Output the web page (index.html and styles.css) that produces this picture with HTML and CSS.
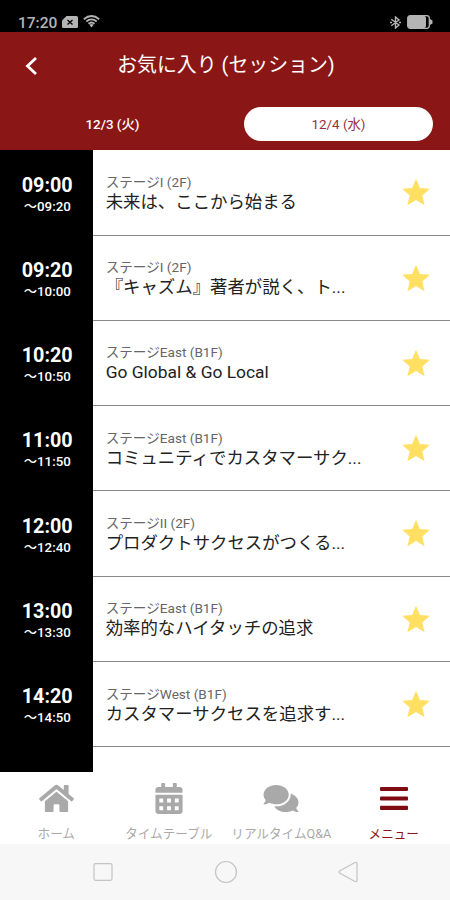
FILE: index.html
```html
<!DOCTYPE html>
<html lang="ja">
<head>
  <meta charset="UTF-8">
  <meta name="viewport" content="width=device-width, initial-scale=1.0">
  <title>お気に入り (セッション)</title>
  <link rel="stylesheet" href="styles.css">
</head>
<body>
  <svg class="sprite">
    <symbol id="star" viewBox="0 0 24 24">
      <path d="M12 17.27L18.18 21l-1.64-7.03L22 9.24l-7.19-.61L12 2 9.19 8.63 2 9.24l5.46 4.73L5.82 21z"/>
    </symbol>
  </svg>
  <div class="app">
    <div class="status-bar">
      <div class="status-left">
        <span class="clock">17:20</span>
        <svg class="sim" width="16" height="12" viewBox="0 0 16 12">
          <path fill="#b4b4b4" d="M4.5 0H14.5Q16 0 16 1.5V10.5Q16 12 14.5 12H1.5Q0 12 0 10.5V4.5z"/>
          <path fill="none" stroke="#000" stroke-width="1.3" d="M5.5 4l5 4.5M10.5 4l-5 4.5"/>
        </svg>
        <svg class="wifi" width="17" height="13" viewBox="0 0 17 13">
          <path fill="none" stroke="#b4b4b4" stroke-width="1.8" d="M.8 4.2Q8.5-2.2 16.2 4.2M3.300 6.5Q8.5 2.2 13.7 6.5M5.5 8.8Q8.5 6.2 11.5 8.8"/>
          <path fill="#b4b4b4" d="M6.3 9.8Q8.5 8 10.7 9.8L8.5 12.5z"/>
        </svg>
      </div>
      <div class="status-right">
        <svg width="11" height="13" viewBox="0 0 11 13">
          <path fill="none" stroke="#b4b4b4" stroke-width="1.4" d="M1.300 3.300L9 9 5.500 12V1L9 4 1.300 9.700M0 6.500h2M9 6.500h2"/>
        </svg>
        <svg width="26" height="14" viewBox="0 0 26 14">
          <rect x=".7" y=".7" width="21.6" height="12.600" rx="2.5" fill="#000" stroke="#b4b4b4" stroke-width="1.3"/>
          <rect x="1" y="1" width="18" height="12" rx="2" fill="#b4b4b4"/>
          <path fill="#b4b4b4" d="M23 4l2.5 1.5v3L23 10z"/>
        </svg>
      </div>
    </div>

    <header class="header">
      <div class="title-bar">
        <svg class="back" width="14" height="20" viewBox="0 0 14 20">
          <path fill="none" stroke="#fff" stroke-width="2.8" d="M12 2L3.500 10l8.500 8"/>
        </svg>
        <h1>お気に入り (セッション)</h1>
      </div>
      <div class="tabs">
        <div class="tab">12/3 (火)</div>
        <div class="tab active">12/4 (水)</div>
      </div>
    </header>

    <main class="sessions">
      <div class="session">
        <div class="time"><b>09:00</b><span>～09:20</span></div>
        <div class="info"><p class="stage">ステージI (2F)</p><p class="name">未来は、ここから始まる</p></div>
        <svg class="star"><use href="#star"/></svg>
      </div>
      <div class="session">
        <div class="time"><b>09:20</b><span>～10:00</span></div>
        <div class="info"><p class="stage">ステージI (2F)</p><p class="name">『キャズム』著者が説く、ト...</p></div>
        <svg class="star"><use href="#star"/></svg>
      </div>
      <div class="session">
        <div class="time"><b>10:20</b><span>～10:50</span></div>
        <div class="info"><p class="stage">ステージEast (B1F)</p><p class="name">Go Global &amp; Go Local</p></div>
        <svg class="star"><use href="#star"/></svg>
      </div>
      <div class="session">
        <div class="time"><b>11:00</b><span>～11:50</span></div>
        <div class="info"><p class="stage">ステージEast (B1F)</p><p class="name">コミュニティでカスタマーサク...</p></div>
        <svg class="star"><use href="#star"/></svg>
      </div>
      <div class="session">
        <div class="time"><b>12:00</b><span>～12:40</span></div>
        <div class="info"><p class="stage">ステージII (2F)</p><p class="name">プロダクトサクセスがつくる...</p></div>
        <svg class="star"><use href="#star"/></svg>
      </div>
      <div class="session">
        <div class="time"><b>13:00</b><span>～13:30</span></div>
        <div class="info"><p class="stage">ステージEast (B1F)</p><p class="name">効率的なハイタッチの追求</p></div>
        <svg class="star"><use href="#star"/></svg>
      </div>
      <div class="session">
        <div class="time"><b>14:20</b><span>～14:50</span></div>
        <div class="info"><p class="stage">ステージWest (B1F)</p><p class="name">カスタマーサクセスを追求す...</p></div>
        <svg class="star"><use href="#star"/></svg>
      </div>
      <div class="session">
        <div class="time"></div>
      </div>
    </main>

    <nav class="tab-bar">
      <div class="item">
        <svg width="35" height="31" viewBox="0 0 576 512">
          <path d="M280.37 148.26L96 300.11V464a16 16 0 0 0 16 16l112.06-.29a16 16 0 0 0 15.92-16V368a16 16 0 0 1 16-16h64a16 16 0 0 1 16 16v95.64a16 16 0 0 0 16 16.05L464 480a16 16 0 0 0 16-16V300L295.67 148.26a12.19 12.19 0 0 0-15.3 0zM571.6 251.47L488 182.56V44.05a12 12 0 0 0-12-12h-56a12 12 0 0 0-12 12v72.61L318.47 43a48 48 0 0 0-61 0L4.34 251.47a12 12 0 0 0-1.6 16.9l25.5 31A12 12 0 0 0 45.15 301l235.22-193.74a12.19 12.19 0 0 1 15.3 0L530.9 301a12 12 0 0 0 16.9-1.6l25.5-31a12 12 0 0 0-1.7-16.93z"/>
        </svg>
        <span>ホーム</span>
      </div>
      <div class="item">
        <svg width="28" height="31" viewBox="0 0 448 512">
          <path fill-rule="evenodd" d="M0 192h448v272c0 26.5-21.5 48-48 48H48c-26.5 0-48-21.5-48-48zM64 256v64h64v-64zM192 256v64h64v-64zM320 256v64h64v-64zM64 384v64h64v-64zM192 384v64h64v-64zM320 384v64h64v-64z"/>
          <path d="M400 64h-48V16c0-8.8-7.2-16-16-16h-32c-8.8 0-16 7.2-16 16v48H160V16c0-8.8-7.2-16-16-16h-32c-8.8 0-16 7.2-16 16v48H48C21.5 64 0 85.5 0 112v48h448v-48c0-26.5-21.5-48-48-48z"/>
        </svg>
        <span>タイムテーブル</span>
      </div>
      <div class="item">
        <svg width="36" height="31" viewBox="0 0 576 512">
          <path d="M416 192c0-88.4-93.1-160-208-160S0 103.6 0 192c0 34.3 14.1 65.9 38 92-13.4 30.2-35.5 54.2-35.8 54.5-2.2 2.3-2.8 5.7-1.5 8.7S4.8 352 8 352c36.6 0 66.9-12.3 88.7-25 32.2 15.7 70.3 25 111.3 25 114.9 0 208-71.6 208-160zm122 220c23.9-26 38-57.7 38-92 0-66.9-53.5-124.2-129.3-148.1.9 6.6 1.3 13.3 1.3 20.1 0 105.9-107.7 192-240 192-10.8 0-21.3-.8-31.7-1.9C207.8 439.6 281.8 480 368 480c41 0 79.1-9.2 111.3-25 21.8 12.7 52.1 25 88.7 25 3.2 0 6.1-1.9 7.3-4.8 1.3-2.9.7-6.3-1.5-8.7-.3-.3-22.4-24.2-35.8-54.5z"/>
        </svg>
        <span>リアルタイムQ&amp;A</span>
      </div>
      <div class="item active">
        <svg width="28" height="31" viewBox="0 0 28 31">
          <rect y="3.9" width="28" height="4.2" rx="1"/>
          <rect y="13.4" width="28" height="4.2" rx="1"/>
          <rect y="22.7" width="28" height="4.2" rx="1"/>
        </svg>
        <span>メニュー</span>
      </div>
    </nav>

    <div class="system-nav">
      <svg width="20" height="24" viewBox="0 0 20 24"><rect x="1" y="3.700" width="18" height="16.6" rx="1.5"/></svg>
      <svg width="24" height="24" viewBox="0 0 24 24"><circle cx="12" cy="12" r="10.5"/></svg>
      <svg width="20" height="24" viewBox="0 0 20 24"><path d="M1.5 11Q.5 12 1.5 13L17 21.5Q19 22.3 19 20.5V3.5Q19 1.7 17 2.5z"/></svg>
    </div>
  </div>
</body>
</html>
```
FILE: styles.css
```css
* {
  box-sizing: border-box;
}
body {
  margin: 0;
  font-family: Roboto, "Noto Sans CJK JP", sans-serif;
  color: #222;
  background: #fff;
}
h1, p {
  margin: 0;
}
.sprite {
  display: none;
}
.app {
  width: 450px;
  height: 900px;
  display: flex;
  flex-direction: column;
  overflow: hidden;
}
.status-bar {
  height: 32px;
  flex: none;
  display: flex;
  justify-content: space-between;
  padding: 14px 17px 0 18px;
  background: #000;
  color: #b4b4b4;
}
.status-left, .status-right {
  display: flex;
  height: 16px;
  align-items: center;
}
.status-left {
  gap: 5px;
}
.status-right {
  gap: 6px;
}
.clock {
  padding-top: 1px;
  font-size: 15.5px;
  font-weight: 500;
  line-height: 18px;
}
.wifi {
  margin-bottom: 2px;
}
.header {
  height: 118.3px;
  flex: none;
  background: #8b1616;
  color: #fff;
}
.title-bar {
  height: 67px;
  display: grid;
  grid-template-columns: 40px 1fr 38px;
  align-items: center;
}
.back {
  margin-left: 24px;
}
.title-bar h1 {
  font-size: 19.9px;
  font-weight: 400;
  line-height: 28px;
  padding-top: 1px;
  text-align: center;
}
.tabs {
  display: grid;
  grid-template-columns: 1fr 1fr;
  padding: 8px 0 0;
}
.tab {
  height: 34px;
  margin: 0 17px 0 19px;
  border-radius: 17px;
  font-size: 13.4px;
  font-weight: 500;
  line-height: 36px;
  text-align: center;
}
.tab:first-child {
  margin-right: 19px;
}
.tab.active {
  background: #fff;
  color: #96303c;
  font-weight: 400;
}
.sessions {
  flex: 1;
  min-height: 0;
  overflow: hidden;
}
.session {
  height: 85.3px;
  display: flex;
}
.time {
  width: 92.5px;
  flex: none;
  display: flex;
  flex-direction: column;
  align-items: center;
  padding: 24.3px 0 0 2px;
  background: #000;
  color: #fff;
}
.time b {
  font-size: 19.8px;
  line-height: 22px;
}
.time span {
  font-size: 13.3px;
  font-weight: 500;
  line-height: 20px;
}
.info {
  flex: 1;
  padding: 22.5px 0 0 13.2px;
  border-bottom: 1.5px solid #888;
  white-space: nowrap;
}
.stage {
  font-size: 13.6px;
  line-height: 19px;
  color: #666;
}
.name {
  font-size: 17.4px;
  line-height: 20px;
}
.star {
  width: 60.5px;
  height: 85.3px;
  padding: 26px 8.5px 25px 0;
  border-bottom: 1.5px solid #888;
  fill: #ffe063;
}
.tab-bar {
  height: 72px;
  flex: none;
  display: grid;
  grid-template-columns: repeat(4, 1fr);
  background: #fff;
}
.item {
  display: flex;
  flex-direction: column;
  align-items: center;
  padding-top: 11px;
  color: #aaa;
  fill: #a9a9a9;
}
.item span {
  margin-top: 11px;
  font-size: 12.6px;
  line-height: 18px;
  white-space: nowrap;
}
.item.active {
  color: #8b1616;
  fill: #800b10;
}
.system-nav {
  height: 56px;
  flex: none;
  display: flex;
  justify-content: space-between;
  align-items: center;
  padding: 0 92px 0 93px;
  background: #f7f7f7;
}
.system-nav svg {
  fill: none;
  stroke: #c4c4c4;
  stroke-width: 1.2;
}
```
